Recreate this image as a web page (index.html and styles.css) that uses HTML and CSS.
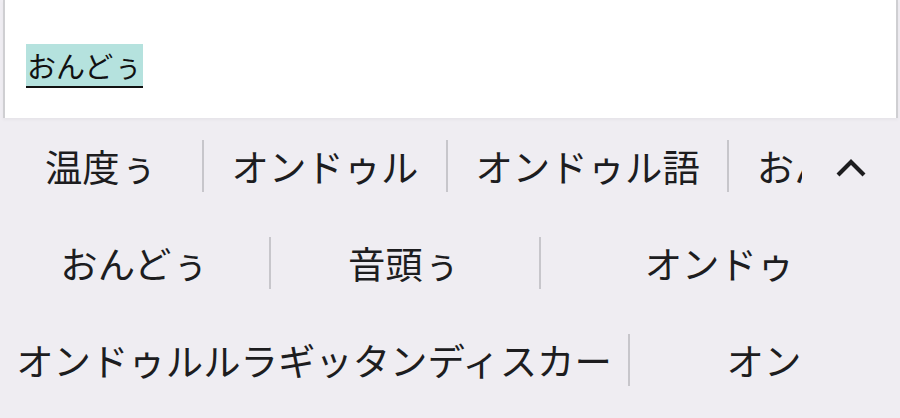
FILE: index.html
```html
<!DOCTYPE html>
<html lang="ja">
<head>
<meta charset="utf-8">
<link rel="stylesheet" href="styles.css">
</head>
<body>
<div class="editor">
  <span class="marked">おんどぅ</span>
</div>
<div class="candidates">
  <div class="row row-first">
    <div class="strip">
      <div class="cand cand-wide">温度ぅ</div>
      <div class="cand sep">オンドゥル</div>
      <div class="cand sep">オンドゥル語</div>
      <div class="cand sep">おんどぅる</div>
    </div>
    <div class="expand">
      <svg width="30" height="19" viewBox="0 0 30 19"><path d="M2 17 L15 4 L28 17" fill="none" stroke="#1d1d1f" stroke-width="4.2"/></svg>
    </div>
  </div>
  <div class="row grid3">
    <div class="cell">おんどぅ</div>
    <div class="cell sep">音頭ぅ</div>
    <div class="cell sep">オンドゥ</div>
  </div>
  <div class="row grid2">
    <div class="cell">オンドゥルルラギッタンディスカー</div>
    <div class="cell sep">オン</div>
  </div>
</div>
</body>
</html>
```
FILE: styles.css
```css
html, body {
  margin: 0;
  padding: 0;
  background: #efedf2;
  font-family: "Noto Sans CJK JP", "Noto Sans", sans-serif;
  color: #1d1d1f;
  width: 900px;
  height: 418px;
  overflow: hidden;
}

.editor {
  box-sizing: border-box;
  height: 118px;
  margin: 0 2px 0 3px;
  background: #ffffff;
  border-left: 2px solid #cfcfd2;
  border-right: 2px solid #cfcfd2;
  padding: 44px 0 0 21px;
  box-shadow: 0 2px 3px rgba(0, 0, 0, 0.04);
}

.marked {
  display: inline-block;
  font-size: 29px;
  line-height: 42px;
  height: 42px;
  padding: 0 1px;
  background: #b5e2de;
  border-bottom: 2px solid #111;
  color: #111;
}

.candidates {
  display: flex;
  flex-direction: column;
}

.row {
  height: 97px;
  font-size: 37.4px;
  line-height: 97px;
}

.row-first {
  display: flex;
}

.strip {
  width: 802px;
  display: flex;
  overflow: hidden;
  white-space: nowrap;
}

.cand {
  flex: 0 0 auto;
  padding: 0 27.5px;
  position: relative;
  text-align: center;
}

.cand-wide {
  box-sizing: border-box;
  width: 202px;
  padding: 0;
}

.sep::before {
  content: "";
  position: absolute;
  left: 0;
  top: 22px;
  width: 2px;
  height: 52px;
  background: #c7c6cb;
}

.cand.sep {
  padding-left: 29.5px;
}

.expand {
  flex: 1;
  display: flex;
  align-items: center;
  justify-content: center;
  padding-top: 2px;
}

.grid3 {
  display: grid;
  grid-template-columns: 269px 270px 1fr;
}

.grid2 {
  display: grid;
  grid-template-columns: 628px 1fr;
}

.cell {
  position: relative;
  text-align: center;
  white-space: nowrap;
}
```
